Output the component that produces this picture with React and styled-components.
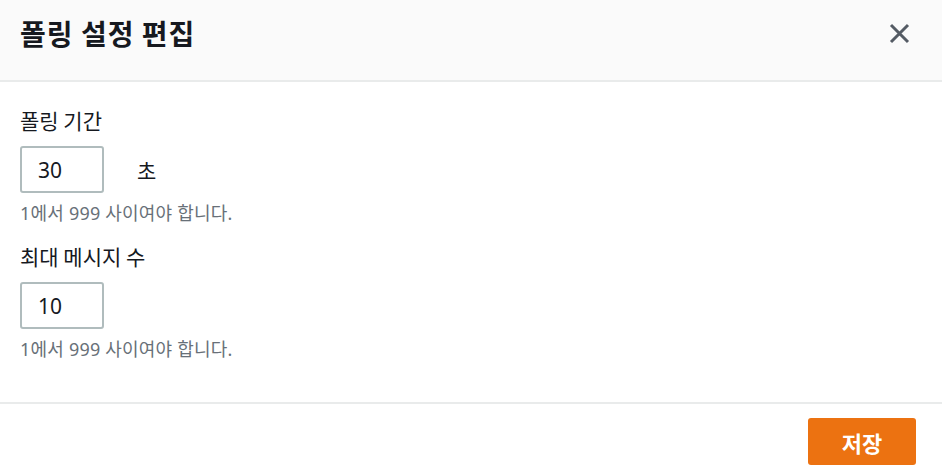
import React from 'react'
import { styled, createGlobalStyle } from 'styled-components'

const GlobalStyle = createGlobalStyle`
  html, body {
    margin: 0;
    padding: 0;
    background: #ffffff;
    font-family: "Noto Sans", "Noto Sans CJK KR", sans-serif;
    color: #16191f;
  }
`

const Modal = styled.section`
  width: 942px;
  height: 476px;
  display: flex;
  flex-direction: column;
  background: #ffffff;
  overflow: hidden;
`

const Header = styled.header`
  flex: none;
  box-sizing: content-box;
  height: 66px;
  background: #fafafa;
  border-bottom: 2px solid #e9ebeb;
  display: flex;
  align-items: center;
  justify-content: space-between;
  padding: 0 32px 14px 20px;
`

const Title = styled.h2`
  margin: 0;
  font-family: "Noto Sans CJK KR", sans-serif;
  font-size: 28px;
  font-weight: 700;
  line-height: 38px;
  letter-spacing: 1px;
  color: #16191f;
`

const CloseButton = styled.button`
  border: none;
  background: none;
  padding: 0;
  width: 21px;
  height: 21px;
  display: flex;
  color: #545b64;
  cursor: pointer;
`

const Body = styled.div`
  padding: 24px 20px 0 20px;
  flex: 1;
  display: flex;
  flex-direction: column;
`

const Field = styled.div`
  display: flex;
  flex-direction: column;
  margin-bottom: ${p => p.$gap || 0}px;
`

const Label = styled.label`
  font-family: "Noto Sans CJK KR", sans-serif;
  font-size: 21px;
  line-height: 28px;
  color: #16191f;
  margin-bottom: 12px;
`

const InputRow = styled.div`
  display: flex;
  align-items: center;
  gap: 33px;
`

const NumberBox = styled.input`
  width: 84px;
  height: 47px;
  box-sizing: border-box;
  border: 2px solid #b0bcbd;
  border-radius: 3px;
  padding: 0 0 0 16px;
  font-family: "Noto Sans", sans-serif;
  font-size: 21px;
  color: #16191f;
  background: #ffffff;
  outline: none;
`

const Unit = styled.span`
  font-family: "Noto Sans CJK KR", sans-serif;
  font-size: 21px;
  color: #16191f;
`

const Hint = styled.div`
  margin-top: 8px;
  font-family: "Noto Sans", "Noto Sans CJK KR", sans-serif;
  font-size: 18px;
  line-height: 24px;
  letter-spacing: 0.2px;
  color: #687078;
`

const Footer = styled.footer`
  flex: none;
  height: 74px;
  border-top: 2px solid #e9ebeb;
  display: flex;
  justify-content: flex-end;
  align-items: flex-start;
  padding: 14px 26px 0 0;
  box-sizing: border-box;
`

const SaveButton = styled.button`
  width: 108px;
  height: 47px;
  border: none;
  border-radius: 3px;
  background: #ec7211;
  color: #ffffff;
  font-family: "Noto Sans CJK KR", sans-serif;
  font-size: 22px;
  font-weight: 700;
  cursor: pointer;
`

function CloseIcon() {
  return (
    <svg width="21" height="21" viewBox="0 0 21 21" fill="none">
      <path d="M2 2 L19 19 M19 2 L2 19" stroke="currentColor" strokeWidth="3" />
    </svg>
  )
}

export default function App() {
  return (
    <>
      <GlobalStyle />
      <Modal>
        <Header>
          <Title>폴링 설정 편집</Title>
          <CloseButton aria-label="닫기"><CloseIcon /></CloseButton>
        </Header>
        <Body>
          <Field $gap={17}>
            <Label>폴링 기간</Label>
            <InputRow>
              <NumberBox defaultValue="30" />
              <Unit>초</Unit>
            </InputRow>
            <Hint>1에서 999 사이여야 합니다.</Hint>
          </Field>
          <Field>
            <Label>최대 메시지 수</Label>
            <InputRow>
              <NumberBox defaultValue="10" />
            </InputRow>
            <Hint>1에서 999 사이여야 합니다.</Hint>
          </Field>
        </Body>
        <Footer>
          <SaveButton>저장</SaveButton>
        </Footer>
      </Modal>
    </>
  )
}
